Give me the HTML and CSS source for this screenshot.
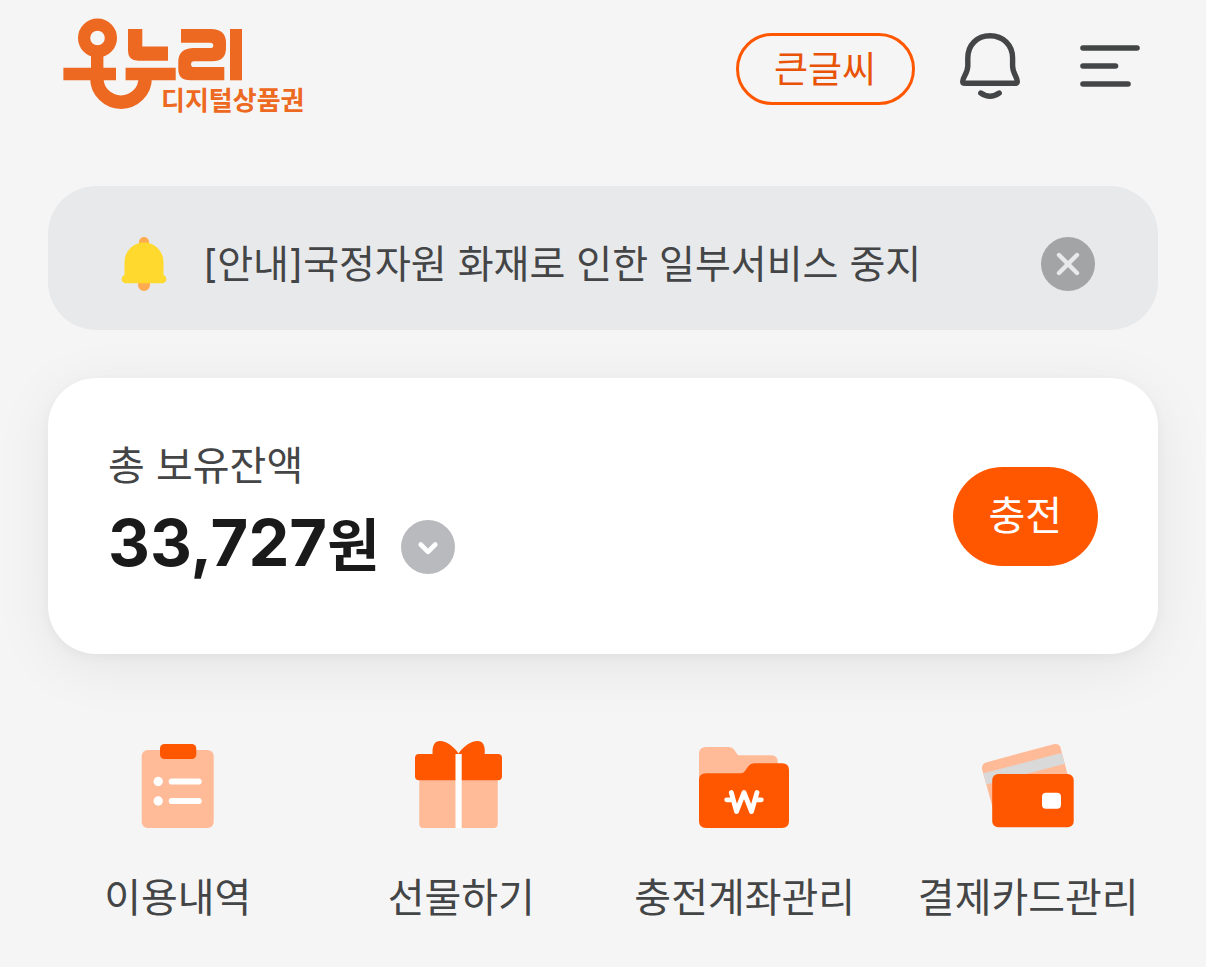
FILE: index.html
```html
<!DOCTYPE html>
<html lang="ko">
<head>
<meta charset="utf-8">
<meta name="viewport" content="width=device-width, initial-scale=1">
<title>온누리 디지털상품권</title>
<link rel="stylesheet" href="styles.css">
</head>
<body>
<header class="header">
  <a class="logo" href="#" aria-label="온누리 디지털상품권">
    <svg width="244" height="102" viewBox="63 18 244 102">
      <g fill="none" stroke="#ed6820">
        <circle cx="97.5" cy="38" r="13.4" stroke-width="12.2"/>
        <path d="M97.2 54V74" stroke-width="12.4"/>
        <path d="M63.4 74H116M125.6 74H175.7" stroke-width="12.6"/>
        <path d="M96.8 78A24.2 24.2 0 0 0 145.2 78" stroke-width="13.4"/>
        <path d="M236 29V80.3" stroke-width="12"/>
      </g>
      <g fill="#ed6820">
        <path d="M128 29H142.3V46.4H168V60.7H138Q128 60.7 128 51Z"/>
        <path d="M181 29H211Q226 29 226 43V48Q226 61.3 212 61.3H194Q191 61.3 191 64.2T194 67H224.3V80.3H190Q178.3 80.3 178.3 69V62Q178.3 48 194 48H210Q213.3 48 213.3 45.4T210 42.7H181Z"/>
        <text class="logo-sub" x="161" y="110">디지털상품권</text>
      </g>
    </svg>
  </a>
  <button class="size-btn" type="button">큰글씨</button>
  <button class="icon-btn" type="button" aria-label="알림">
    <svg width="60" height="72" viewBox="960 33 60 72" fill="none" stroke="#444546" stroke-width="5.4" stroke-linecap="round" stroke-linejoin="round">
      <path d="M967.8 58C967.8 45 977 35.7 990 35.7S1012.600 45 1012.600 58V66C1012.600 73 1017.300 77 1017.300 81.500Q1017.300 83.300 1015 83.300H965Q962.700 83.300 962.700 81.500C962.700 77 967.800 73 967.800 66Z"/>
      <path d="M980.800 93Q990 99.500 999.200 93"/>
    </svg>
  </button>
  <button class="icon-btn" type="button" aria-label="메뉴">
    <svg width="60" height="72" viewBox="1080 33 60 72" fill="none" stroke="#444546" stroke-width="5.6" stroke-linecap="round">
      <path d="M1083 48H1137M1083 66H1115.500M1083 84H1128"/>
    </svg>
  </button>
</header>

<main class="main">
  <section class="notice" aria-label="공지">
    <svg class="notice-bell" width="46" height="56" viewBox="121 236 46 56">
      <path fill="#ffab4f" d="M139 245V242A5 5 0 0 1 149 242V245ZM138 282H150V285A6 6 0 0 1 138 285Z"/>
      <path fill="#ffd92e" d="M124.500 262A19.500 19.500 0 0 1 163.500 262V275A4.300 4.300 0 0 1 162.500 283.300H125.500A4.300 4.300 0 0 1 124.500 275Z"/>
    </svg>
    <p class="notice-text">[안내]국정자원 화재로 인한 일부서비스 중지</p>
    <button class="round-btn close-btn" type="button" aria-label="닫기">
      <svg width="54" height="54" viewBox="0 0 54 54" fill="none" stroke="#e8e9eb" stroke-width="4.400" stroke-linecap="round"><path d="M18 18L36 36M36 18L18 36"/></svg>
    </button>
  </section>

  <section class="card">
    <div class="balance">
      <h2 class="balance-label">총 보유잔액</h2>
      <div class="balance-row">
        <p class="amount">33,727<span class="won">원</span></p>
        <button class="round-btn more-btn" type="button" aria-label="잔액 상세 보기">
          <svg width="54" height="54" viewBox="0 0 54 54" fill="none" stroke="#fff" stroke-width="4.600" stroke-linecap="round" stroke-linejoin="round"><path d="M19.700 24.500L27 31.800L34.300 24.500"/></svg>
        </button>
      </div>
    </div>
    <button class="charge-btn" type="button">충전</button>
  </section>

  <nav class="menu" aria-label="주요 서비스">
    <a class="menu-item" href="#">
      <svg width="96" height="96" viewBox="130 738 96 96">
        <rect x="141.700" y="750" width="72" height="78" rx="6" fill="#ffba98"/>
        <rect x="160" y="744" width="36.300" height="15" rx="4.500" fill="#ff5700"/>
        <g fill="#fff"><circle cx="158.200" cy="781.500" r="4.700"/><circle cx="158.200" cy="801" r="4.700"/><rect x="168.700" y="778.400" width="33" height="6.200" rx="3.100"/><rect x="168.700" y="797.900" width="33" height="6.200" rx="3.100"/></g>
      </svg>
      <span>이용내역</span>
    </a>
    <a class="menu-item" href="#">
      <svg width="96" height="96" viewBox="413 738 96 96">
        <path fill="#ffba98" d="M419.300 778H497.700V824Q497.700 828 493.700 828H423.300Q419.300 828 419.300 824Z"/>
        <path fill="#ff5700" d="M432.800 756C431.500 745 435 741 440 741C447 741 454 747 458.600 753.500C463 747 470.500 741 477.500 741C482.500 741 486 745 484.500 756Z"/>
        <rect x="415" y="754" width="87" height="26.300" rx="4" fill="#ff5700"/>
        <rect x="455.500" y="754" width="6.200" height="74" fill="#fff"/>
      </svg>
      <span>선물하기</span>
    </a>
    <a class="menu-item" href="#">
      <svg width="96" height="96" viewBox="697 738 96 96">
        <path fill="#ffba98" d="M699 785V754Q699 747 706 747H729Q732 747 734 749.500L738 755.300H771Q777.800 755.300 777.800 762V775Z"/>
        <path fill="#ff5700" d="M699 780Q699 773.300 706 773.300H741Q743.500 773.300 745 771L748.500 766Q750.500 763.300 754 763.300H782Q789 763.300 789 770V821Q789 828 782 828H706Q699 828 699 821Z"/>
        <path fill="none" stroke="#fff" stroke-width="4.800" stroke-linecap="round" stroke-linejoin="round" d="M731.300 792.500L736.500 811.500L744 792.500L751.500 811.500L757 792.500M726.700 799.800H732M756 799.800H761.300"/>
      </svg>
      <span>충전계좌관리</span>
    </a>
    <a class="menu-item" href="#">
      <svg width="96" height="96" viewBox="980 738 96 96">
        <path fill="#ffba98" d="M982.200 769.500Q981.200 764.200 986 762.500L1053.500 744.200Q1059 743 1060.500 747.500L1069 780L993 809Z"/>
        <path fill="#d9d9d9" d="M983.300 773.300L1061.500 753L1064.800 763.800L986.300 784.500Z"/>
        <rect x="992.200" y="774" width="81.500" height="53.300" rx="6" fill="#ff5700"/>
        <rect x="1042" y="792.700" width="19" height="16" rx="4" fill="#fff"/>
      </svg>
      <span>결제카드관리</span>
    </a>
  </nav>
</main>
</body>
</html>
```
FILE: styles.css
```css
* {
  box-sizing: border-box;
}

body {
  margin: 0;
  background: #f5f5f5;
  color: #444546;
  font-family: "Noto Sans CJK KR", sans-serif;
  font-size: 40px;
  line-height: 56px;
}

h2,
p {
  margin: 0;
  font-size: inherit;
  font-weight: 400;
}

button {
  padding: 0;
  border: 0;
  background: none;
  color: inherit;
  font: inherit;
  cursor: pointer;
}

svg {
  display: block;
  flex: none;
}

.header {
  display: flex;
  align-items: center;
  padding: 18px 66px 18px 63px;
}

.logo {
  margin-right: auto;
}

.logo-sub {
  font-size: 26px;
  font-weight: 700;
}

.size-btn {
  height: 72px;
  margin-right: 45px;
  padding: 0 36px 5px 35px;
  border: 3px solid #ff5700;
  border-radius: 36px;
  color: #e95307;
  font-size: 37px;
  line-height: 60px;
}

.icon-btn + .icon-btn {
  margin-left: 60px;
}

.main {
  padding: 48px 48px 40px;
}

.notice {
  display: flex;
  align-items: center;
  padding: 50px 63px 38px 73px;
  border-radius: 48px;
  background: #e8e9eb;
}

.notice-text {
  flex: 1;
  margin-left: 36px;
  font-family: Inter, "Noto Sans CJK KR", sans-serif;
  font-size: 39px;
  line-height: 54px;
}

.round-btn {
  flex: none;
  width: 54px;
  height: 54px;
  border-radius: 50%;
}

.close-btn {
  background: #a3a4a6;
}

.more-btn {
  background: #b9babe;
}

.card {
  display: flex;
  align-items: center;
  justify-content: space-between;
  margin-top: 48px;
  padding: 60px;
  border-radius: 48px;
  background: #fff;
  box-shadow: 0 12px 60px rgba(0, 0, 0, 0.07), 0 3px 12px rgba(0, 0, 0, 0.04);
}

.balance {
  height: 156px;
}

.balance-label {
  line-height: 50px;
}

.balance-row {
  display: flex;
  align-items: center;
  gap: 21px;
  margin-top: 17px;
}

.amount {
  padding-bottom: 4px;
  color: #1a1a1a;
  font-family: Inter, "Noto Sans CJK KR", sans-serif;
  font-size: 65px;
  font-weight: 700;
  line-height: 76px;
}

.won {
  font-size: 57px;
}

.charge-btn {
  padding: 18px 36px 25px 35px;
  border-radius: 50px;
  background: #ff5700;
  color: #fff;
}

.menu {
  display: grid;
  grid-template-columns: repeat(4, 1fr);
  margin: 84px -12px 0;
}

.menu-item {
  display: flex;
  flex-direction: column;
  align-items: center;
  gap: 33px;
  color: inherit;
  text-decoration: none;
  white-space: nowrap;
}
```
